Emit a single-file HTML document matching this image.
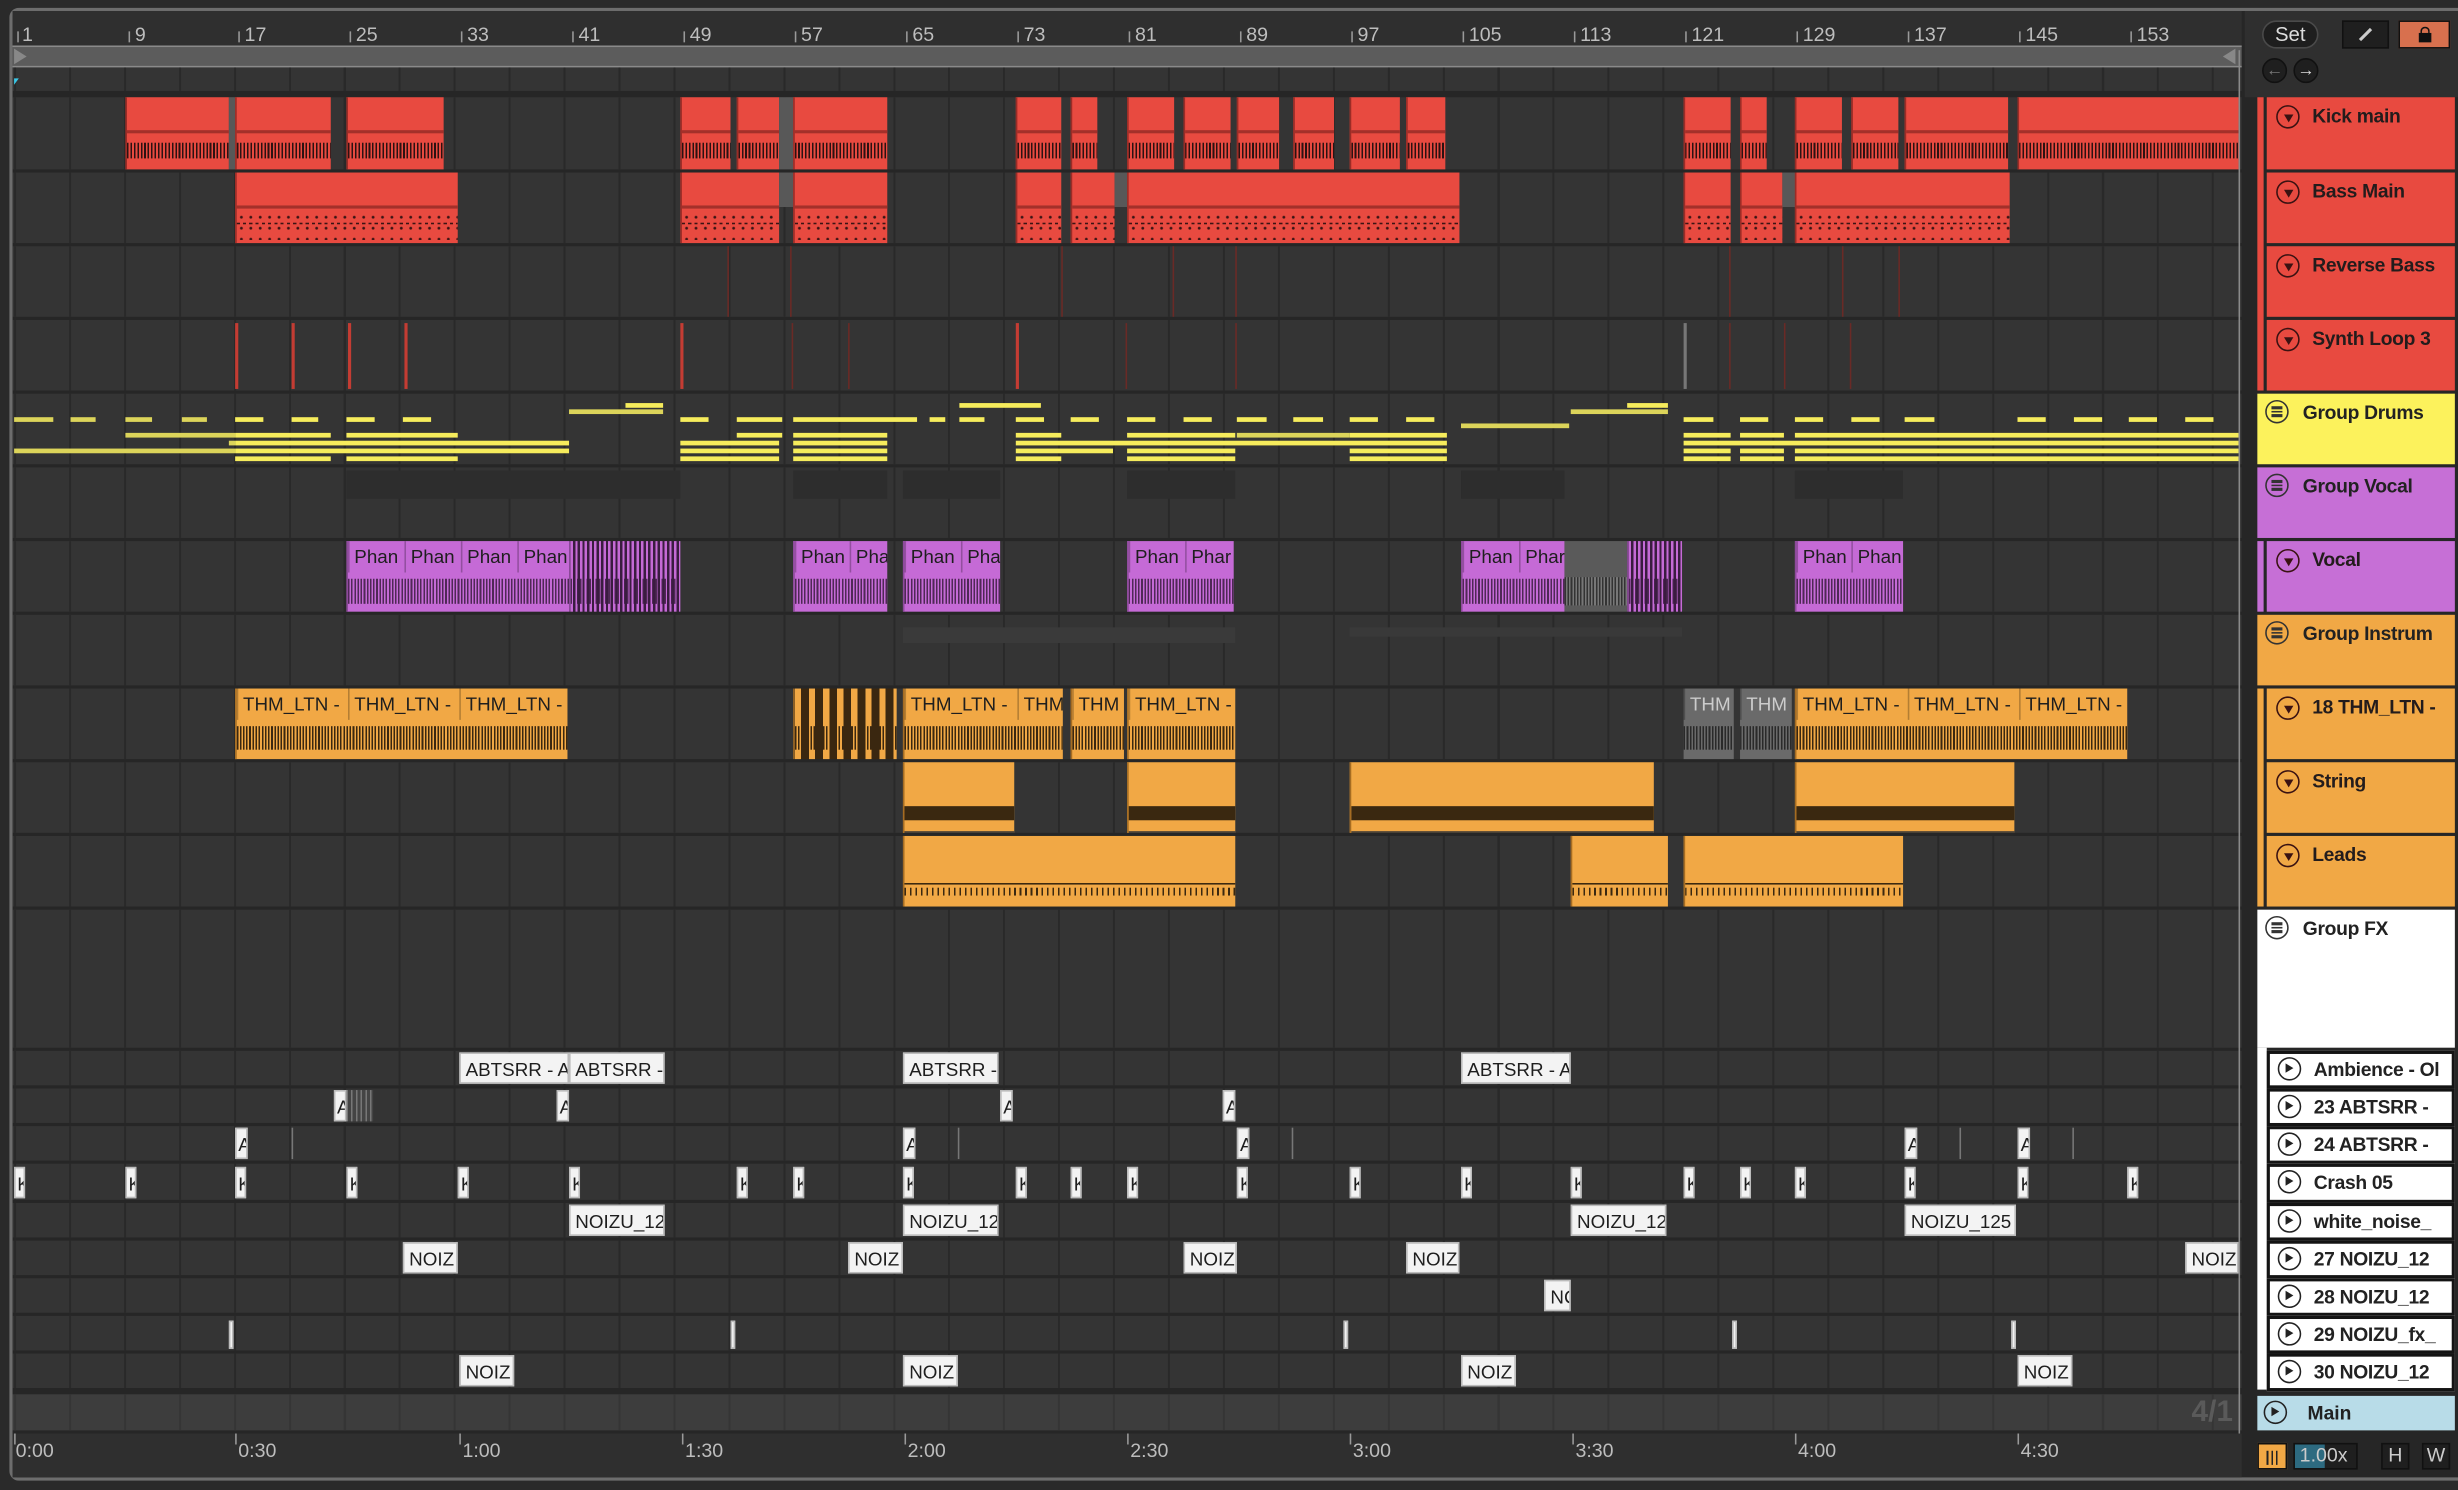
<!DOCTYPE html>
<html><head><meta charset="utf-8"><style>
*{margin:0;padding:0;box-sizing:border-box}
html,body{width:2458px;height:1490px;overflow:hidden;background:#2a2a2a}
#s{position:absolute;left:0;top:0;width:1568px;height:950px;transform:scale(1.5676,1.5684);transform-origin:0 0;font-family:"Liberation Sans",sans-serif}
#s div{position:absolute}
.row{left:8px;width:1422px;background-color:#343434;background-image:repeating-linear-gradient(90deg,#292929 0 1.3px,transparent 1.3px 35.05px);background-position:1px 0}
.k{top:62px;height:46px;background:linear-gradient(#a3302a,#a3302a) 0 21px/100% 2px no-repeat,repeating-linear-gradient(90deg,#2b1212 0 1px,transparent 1px 2.2px) 0 29px/100% 10px no-repeat,#e84a40;border-left:1px solid #9a2c26}
.b{top:110px;height:45px;background:linear-gradient(#a3302a,#a3302a) 0 21px/100% 2px no-repeat,repeating-linear-gradient(90deg,#3a1414 0 2px,transparent 2px 4px) 0 32px/100% 1px no-repeat,#e84a40;border-left:1px solid #9a2c26}
.b::after{content:'';position:absolute;left:0;right:0;top:25px;bottom:2px;background:radial-gradient(circle,#3a1414 0.7px,transparent 1.1px) 0 0/6px 7px}
.y{height:3px;background:#f6ec5c}
.yl{height:3px;background:#dcd45a}
.v{top:345px;height:45px;background:#c56ad6;border-left:1px solid #8e4a9c;overflow:hidden}
.v::after{content:'';position:absolute;left:0;right:0;top:24px;height:16px;background:repeating-linear-gradient(90deg,#3a1c40 0 1px,transparent 1px 2px);opacity:.85}
.seg{top:0;height:20px;font-size:12px;line-height:21px;color:#1e1e1e;padding-left:3px;white-space:nowrap;overflow:hidden;border-left:1px solid rgba(0,0,0,.25)}
.o{top:439px;height:45px;background:#f1a845;border-left:1px solid #a56c22;overflow:hidden}
.o::after{content:'';position:absolute;left:0;right:0;top:24px;height:15px;background:repeating-linear-gradient(90deg,#3a2710 0 1px,transparent 1px 2px)}
.g{top:439px;height:45px;background:#6a6a6a;overflow:hidden}
.g::after{content:'';position:absolute;left:0;right:0;top:24px;height:15px;background:repeating-linear-gradient(90deg,#2a2a2a 0 1px,transparent 1px 2px)}
.st{top:486px;height:45px;background:linear-gradient(#3a2810,#3a2810) 0 28px/100% 9px no-repeat,linear-gradient(#343434,#343434) 0 44px/100% 1px no-repeat,#f1a845;border-left:1px solid #a56c22}
.le{top:533px;height:45px;background:repeating-linear-gradient(90deg,#3a2810 0 1px,transparent 1px 3.5px) 0 33px/100% 5px no-repeat,linear-gradient(#3a2810,#3a2810) 0 30px/100% 1px no-repeat,#f1a845;border-left:1px solid #a56c22}
.w{height:20px;background:#f3f3f3;font-size:12px;line-height:20px;color:#1e1e1e;padding-left:3px;white-space:nowrap;overflow:hidden;border:1px solid #bbb}
.hd{left:1446px;width:120px;font-size:12.3px;letter-spacing:-0.2px;font-weight:bold;color:#231c1c;white-space:nowrap;overflow:hidden}
.hd span,.hg span{position:absolute;left:29px;top:5px}
.ic{left:6px;top:5px;width:15px;height:15px;border:1.5px solid #3a1212;border-radius:50%}
.tri{left:3.5px;top:4.5px;width:0;height:0;border-left:3.5px solid transparent;border-right:3.5px solid transparent;border-top:5px solid #3a1212}
.hg{left:1440px;width:126px;font-size:12.3px;letter-spacing:-0.2px;font-weight:bold;color:#222;white-space:nowrap;overflow:hidden}
.gl{left:3px;height:1.5px;width:7px;background:#333}
.fx{left:1446px;width:120px;height:24px;background:#fff;border:2px solid #141414;font-size:12.3px;letter-spacing:-0.2px;font-weight:bold;color:#222;white-space:nowrap;overflow:hidden}
.fx span{position:absolute;left:28px;top:3px}
.pl{left:5px;top:2px;width:15px;height:15px;border:1.5px solid #222;border-radius:50%}
.pl i{position:absolute;left:4px;top:2.5px;width:0;height:0;border-top:3.5px solid transparent;border-bottom:3.5px solid transparent;border-left:5px solid #222}
.rn{top:15px;font-size:12.5px;color:#bdbdbd}
.rt{width:1px;height:7px;background:#999;top:20px}
.tn{top:918px;font-size:12.5px;color:#bdbdbd}
.rl{width:2px;background:#c43c33}
</style></head><body><div id="s">
<div style="left:6px;top:5px;width:1590px;height:939px;border:2px solid #6d6d6d;border-radius:6px;background:#262626"></div>
<div style="left:8px;top:7px;width:1422px;height:22px;background:#2f2f2f"></div>
<div class="rn" style="left:14px">1</div><div class="rt" style="left:11px"></div>
<div class="rn" style="left:86px">9</div><div class="rt" style="left:82px"></div>
<div class="rn" style="left:156px">17</div><div class="rt" style="left:152px"></div>
<div class="rn" style="left:227px">25</div><div class="rt" style="left:223px"></div>
<div class="rn" style="left:298px">33</div><div class="rt" style="left:294px"></div>
<div class="rn" style="left:369px">41</div><div class="rt" style="left:365px"></div>
<div class="rn" style="left:440px">49</div><div class="rt" style="left:436px"></div>
<div class="rn" style="left:511px">57</div><div class="rt" style="left:507px"></div>
<div class="rn" style="left:582px">65</div><div class="rt" style="left:578px"></div>
<div class="rn" style="left:653px">73</div><div class="rt" style="left:649px"></div>
<div class="rn" style="left:724px">81</div><div class="rt" style="left:720px"></div>
<div class="rn" style="left:795px">89</div><div class="rt" style="left:791px"></div>
<div class="rn" style="left:866px">97</div><div class="rt" style="left:862px"></div>
<div class="rn" style="left:937px">105</div><div class="rt" style="left:933px"></div>
<div class="rn" style="left:1008px">113</div><div class="rt" style="left:1004px"></div>
<div class="rn" style="left:1079px">121</div><div class="rt" style="left:1075px"></div>
<div class="rn" style="left:1150px">129</div><div class="rt" style="left:1146px"></div>
<div class="rn" style="left:1221px">137</div><div class="rt" style="left:1217px"></div>
<div class="rn" style="left:1292px">145</div><div class="rt" style="left:1288px"></div>
<div class="rn" style="left:1363px">153</div><div class="rt" style="left:1359px"></div>
<div style="left:8px;top:29px;width:1422px;height:14px;background:#5c5c5c;border-top:1px solid #8a8a8a;border-bottom:1px solid #8a8a8a"></div>
<div style="left:9px;top:31px;width:0;height:0;border-top:5px solid transparent;border-bottom:5px solid transparent;border-left:8px solid #888"></div>
<div style="left:1418px;top:31px;width:0;height:0;border-top:5px solid transparent;border-bottom:5px solid transparent;border-right:8px solid #888"></div>
<div class="row" style="top:43px;height:15px"></div>
<div style="left:9px;top:50px;width:0;height:0;border-left:3px solid #3ac8e8;border-bottom:4px solid transparent"></div>
<div class="row" style="top:62px;height:46px"></div>
<div class="row" style="top:110px;height:45px"></div>
<div class="row" style="top:157px;height:45px"></div>
<div class="row" style="top:204px;height:45px"></div>
<div class="row" style="top:251px;height:45px"></div>
<div class="row" style="top:298px;height:45px"></div>
<div class="row" style="top:345px;height:45px"></div>
<div class="row" style="top:392px;height:45px"></div>
<div class="row" style="top:439px;height:45px"></div>
<div class="row" style="top:486px;height:45px"></div>
<div class="row" style="top:533px;height:45px"></div>
<div class="row" style="top:580px;height:88px"></div>
<div class="row" style="top:670px;height:22px"></div>
<div class="row" style="top:694px;height:22px"></div>
<div class="row" style="top:718px;height:22px"></div>
<div class="row" style="top:742px;height:23px"></div>
<div class="row" style="top:767px;height:22px"></div>
<div class="row" style="top:791px;height:22px"></div>
<div class="row" style="top:815px;height:22px"></div>
<div class="row" style="top:839px;height:22px"></div>
<div class="row" style="top:863px;height:22px"></div>
<div class="row" style="top:889px;height:23px;background-color:#3d3d3d;background-image:repeating-linear-gradient(90deg,#353535 0 1.3px,transparent 1.3px 35.05px)"></div>
<div class="k" style="left:80px;width:66px"></div><div style="left:146px;top:62px;width:4px;height:46px;background:#585858"></div>
<div class="k" style="left:150px;width:61px"></div><div class="k" style="left:221px;width:62px"></div>
<div class="k" style="left:434px;width:32px"></div><div class="k" style="left:470px;width:27px"></div><div style="left:497px;top:62px;width:9px;height:46px;background:#585858"></div><div class="k" style="left:506px;width:60px"></div>
<div class="k" style="left:648px;width:29px"></div><div class="k" style="left:683px;width:17px"></div><div class="k" style="left:719px;width:30px"></div><div class="k" style="left:755px;width:30px"></div><div class="k" style="left:789px;width:27px"></div><div class="k" style="left:825px;width:26px"></div><div class="k" style="left:861px;width:32px"></div><div class="k" style="left:897px;width:25px"></div>
<div class="k" style="left:1074px;width:30px"></div><div class="k" style="left:1110px;width:17px"></div><div class="k" style="left:1145px;width:30px"></div><div class="k" style="left:1181px;width:30px"></div><div class="k" style="left:1215px;width:66px"></div><div class="k" style="left:1287px;width:141px"></div>
<div class="b" style="left:150px;width:142px"></div>
<div class="b" style="left:434px;width:63px"></div><div style="left:497px;top:110px;width:9px;height:22px;background:#585858"></div><div class="b" style="left:506px;width:60px"></div>
<div class="b" style="left:648px;width:29px"></div><div class="b" style="left:683px;width:28px"></div><div style="left:711px;top:110px;width:8px;height:22px;background:#585858"></div><div class="b" style="left:719px;width:212px"></div>
<div class="b" style="left:1074px;width:30px"></div><div class="b" style="left:1110px;width:27px"></div><div style="left:1137px;top:110px;width:8px;height:22px;background:#585858"></div><div class="b" style="left:1145px;width:137px"></div>
<div style="left:464px;top:157px;width:1px;height:45px;background:#6a2a26"></div><div style="left:504px;top:157px;width:1px;height:45px;background:#6a2a26"></div><div style="left:677px;top:157px;width:1px;height:45px;background:#6a2a26"></div><div style="left:748px;top:157px;width:1px;height:45px;background:#6a2a26"></div><div style="left:788px;top:157px;width:1px;height:45px;background:#6a2a26"></div><div style="left:1103px;top:157px;width:1px;height:45px;background:#6a2a26"></div><div style="left:1175px;top:157px;width:1px;height:45px;background:#6a2a26"></div><div style="left:1211px;top:157px;width:1px;height:45px;background:#6a2a26"></div>
<div class="rl" style="left:150px;top:206px;height:42px"></div><div class="rl" style="left:186px;top:206px;height:42px"></div><div class="rl" style="left:222px;top:206px;height:42px"></div><div class="rl" style="left:258px;top:206px;height:42px"></div><div class="rl" style="left:434px;top:206px;height:42px"></div><div class="rl" style="left:648px;top:206px;height:42px"></div><div class="rl" style="left:1074px;top:206px;height:42px;background:#777"></div>
<div style="left:505px;top:206px;width:1px;height:42px;background:#6a2a26"></div><div style="left:541px;top:206px;width:1px;height:42px;background:#6a2a26"></div><div style="left:718px;top:206px;width:1px;height:42px;background:#6a2a26"></div><div style="left:788px;top:206px;width:1px;height:42px;background:#6a2a26"></div><div style="left:1103px;top:206px;width:1px;height:42px;background:#6a2a26"></div><div style="left:1138px;top:206px;width:1px;height:42px;background:#6a2a26"></div><div style="left:1180px;top:206px;width:1px;height:42px;background:#6a2a26"></div>
<div class="y" style="top:257px;left:399px;width:24px"></div><div class="y" style="top:257px;left:612px;width:52px"></div><div class="y" style="top:257px;left:1038px;width:26px"></div>
<div class="yl" style="top:261px;left:363px;width:60px"></div><div class="yl" style="top:261px;left:1002px;width:62px"></div>
<div class="yl" style="top:266px;left:9px;width:25px"></div><div class="yl" style="top:266px;left:45px;width:16px"></div><div class="yl" style="top:266px;left:80px;width:17px"></div><div class="yl" style="top:266px;left:116px;width:16px"></div>
<div class="y" style="top:266px;left:150px;width:18px"></div><div class="y" style="top:266px;left:186px;width:17px"></div><div class="y" style="top:266px;left:221px;width:18px"></div><div class="y" style="top:266px;left:257px;width:18px"></div><div class="y" style="top:266px;left:434px;width:18px"></div><div class="y" style="top:266px;left:470px;width:29px"></div><div class="y" style="top:266px;left:506px;width:79px"></div><div class="y" style="top:266px;left:593px;width:10px"></div><div class="y" style="top:266px;left:612px;width:16px"></div><div class="y" style="top:266px;left:648px;width:18px"></div><div class="y" style="top:266px;left:683px;width:18px"></div><div class="y" style="top:266px;left:719px;width:18px"></div><div class="y" style="top:266px;left:755px;width:18px"></div><div class="y" style="top:266px;left:789px;width:19px"></div><div class="y" style="top:266px;left:825px;width:19px"></div><div class="y" style="top:266px;left:861px;width:18px"></div><div class="y" style="top:266px;left:897px;width:18px"></div><div class="yl" style="top:270px;left:932px;width:69px"></div>
<div class="y" style="top:266px;left:1074px;width:19px"></div><div class="y" style="top:266px;left:1110px;width:18px"></div><div class="y" style="top:266px;left:1145px;width:18px"></div><div class="y" style="top:266px;left:1181px;width:18px"></div><div class="y" style="top:266px;left:1215px;width:19px"></div><div class="y" style="top:266px;left:1287px;width:18px"></div><div class="y" style="top:266px;left:1323px;width:18px"></div><div class="y" style="top:266px;left:1358px;width:18px"></div><div class="y" style="top:266px;left:1394px;width:18px"></div>
<div class="yl" style="top:276px;left:80px;width:70px"></div><div class="y" style="top:276px;left:150px;width:61px"></div><div class="y" style="top:276px;left:221px;width:71px"></div><div class="y" style="top:276px;left:470px;width:29px"></div><div class="y" style="top:276px;left:506px;width:60px"></div><div class="y" style="top:276px;left:648px;width:29px"></div><div class="y" style="top:276px;left:719px;width:69px"></div><div class="yl" style="top:276px;left:789px;width:72px"></div><div class="y" style="top:276px;left:861px;width:62px"></div><div class="y" style="top:276px;left:1074px;width:30px"></div><div class="y" style="top:276px;left:1110px;width:28px"></div><div class="y" style="top:276px;left:1145px;width:283px"></div>
<div class="yl" style="top:281px;left:146px;width:4px"></div><div class="y" style="top:281px;left:150px;width:213px"></div><div class="y" style="top:281px;left:434px;width:63px"></div><div class="y" style="top:281px;left:506px;width:60px"></div><div class="y" style="top:281px;left:648px;width:275px"></div><div class="y" style="top:281px;left:1074px;width:354px"></div>
<div class="yl" style="top:286px;left:9px;width:141px"></div><div class="y" style="top:286px;left:150px;width:213px"></div><div class="y" style="top:286px;left:434px;width:63px"></div><div class="y" style="top:286px;left:506px;width:60px"></div><div class="y" style="top:286px;left:648px;width:62px"></div><div class="y" style="top:286px;left:719px;width:69px"></div><div class="y" style="top:286px;left:861px;width:62px"></div><div class="y" style="top:286px;left:1074px;width:30px"></div><div class="y" style="top:286px;left:1110px;width:28px"></div><div class="y" style="top:286px;left:1145px;width:283px"></div>
<div class="y" style="top:291px;left:150px;width:61px"></div><div class="y" style="top:291px;left:221px;width:71px"></div><div class="y" style="top:291px;left:434px;width:63px"></div><div class="y" style="top:291px;left:506px;width:60px"></div><div class="y" style="top:291px;left:648px;width:29px"></div><div class="y" style="top:291px;left:719px;width:69px"></div><div class="y" style="top:291px;left:861px;width:62px"></div><div class="y" style="top:291px;left:1074px;width:30px"></div><div class="y" style="top:291px;left:1110px;width:28px"></div><div class="y" style="top:291px;left:1145px;width:283px"></div>
<div style="left:221px;top:300px;width:213px;height:18px;background:#2d2d2d"></div><div style="left:506px;top:300px;width:60px;height:18px;background:#2d2d2d"></div><div style="left:576px;top:300px;width:62px;height:18px;background:#2d2d2d"></div><div style="left:719px;top:300px;width:69px;height:18px;background:#2d2d2d"></div><div style="left:932px;top:300px;width:66px;height:18px;background:#2d2d2d"></div><div style="left:1145px;top:300px;width:69px;height:18px;background:#2d2d2d"></div>
<div class="v" style="left:221px;width:142px"><div class="seg" style="left:0;width:36px">Phan</div><div class="seg" style="left:36px;width:36px">Phan</div><div class="seg" style="left:72px;width:36px">Phan</div><div class="seg" style="left:108px;width:34px">Phan</div></div>
<div class="v" style="left:363px;width:71px;background:repeating-linear-gradient(90deg,#c56ad6 0 1.5px,#3a1c40 1.5px 3px)"></div>
<div class="v" style="left:506px;width:60px"><div class="seg" style="left:0;width:35px">Phan</div><div class="seg" style="left:35px;width:25px">Pha</div></div>
<div class="v" style="left:576px;width:62px"><div class="seg" style="left:0;width:36px">Phan</div><div class="seg" style="left:36px;width:26px">Pha</div></div>
<div class="v" style="left:719px;width:68px"><div class="seg" style="left:0;width:36px">Phan</div><div class="seg" style="left:36px;width:32px">Phar</div></div>
<div class="v" style="left:932px;width:66px"><div class="seg" style="left:0;width:36px">Phan</div><div class="seg" style="left:36px;width:30px">Phar</div></div>
<div style="left:998px;top:345px;width:40px;height:45px;background:#5a5a5a"></div><div style="left:998px;top:368px;width:40px;height:18px;background:repeating-linear-gradient(90deg,#333 0 1px,#777 1px 2px)"></div>
<div class="v" style="left:1038px;width:35px;background:repeating-linear-gradient(90deg,#c56ad6 0 1.5px,#3a1c40 1.5px 3px)"></div>
<div class="v" style="left:1145px;width:69px"><div class="seg" style="left:0;width:35px">Phan</div><div class="seg" style="left:35px;width:34px">Phan</div></div>
<div style="left:576px;top:400px;width:212px;height:10px;background:#3a3a3a"></div><div style="left:861px;top:400px;width:212px;height:6px;background:#393939"></div>
<div class="o" style="left:150px;width:212px"><div class="seg" style="left:0;width:71px">THM_LTN -</div><div class="seg" style="left:71px;width:71px">THM_LTN -</div><div class="seg" style="left:142px;width:70px">THM_LTN -</div></div>
<div class="o" style="left:506px;width:66px;background:repeating-linear-gradient(90deg,#f1a845 0 4px,#3a2710 4px 9px)"></div>
<div class="o" style="left:576px;width:102px"><div class="seg" style="left:0;width:72px">THM_LTN -</div><div class="seg" style="left:72px;width:30px">THM</div></div>
<div class="o" style="left:683px;width:34px"><div class="seg" style="left:0;width:34px">THM</div></div>
<div class="o" style="left:719px;width:69px"><div class="seg" style="left:0;width:69px">THM_LTN -</div></div>
<div class="g" style="left:1074px;width:32px"><div class="seg" style="left:0;width:32px;color:#ccc">THM</div></div>
<div class="g" style="left:1110px;width:33px"><div class="seg" style="left:0;width:33px;color:#ccc">THM</div></div>
<div class="o" style="left:1145px;width:212px"><div class="seg" style="left:0;width:71px">THM_LTN -</div><div class="seg" style="left:71px;width:71px">THM_LTN -</div><div class="seg" style="left:142px;width:70px">THM_LTN -</div></div>
<div class="st" style="left:576px;width:71px"></div><div class="st" style="left:719px;width:69px"></div><div class="st" style="left:861px;width:194px"></div><div class="st" style="left:1145px;width:140px"></div>
<div class="le" style="left:576px;width:212px"></div><div class="le" style="left:1002px;width:62px"></div><div class="le" style="left:1074px;width:140px"></div>
<div class="w" style="left:293px;top:671px;width:70px">ABTSRR - A</div><div class="w" style="left:363px;top:671px;width:61px">ABTSRR -</div><div class="w" style="left:576px;top:671px;width:61px">ABTSRR -</div><div class="w" style="left:932px;top:671px;width:70px">ABTSRR - A</div>
<div class="w" style="left:213px;top:695px;width:8px;padding-left:1px">A</div><div style="left:221px;top:695px;width:17px;height:20px;background:repeating-linear-gradient(90deg,#777 0 1px,#444 1px 3px)"></div><div class="w" style="left:355px;top:695px;width:8px;padding-left:1px">A</div><div class="w" style="left:638px;top:695px;width:8px;padding-left:1px">A</div><div class="w" style="left:780px;top:695px;width:8px;padding-left:1px">A</div>
<div class="w" style="left:150px;top:719px;width:8px;padding-left:1px">A</div><div class="w" style="left:576px;top:719px;width:8px;padding-left:1px">A</div><div class="w" style="left:789px;top:719px;width:8px;padding-left:1px">A</div><div class="w" style="left:1215px;top:719px;width:8px;padding-left:1px">A</div><div class="w" style="left:1287px;top:719px;width:8px;padding-left:1px">A</div>
<div style="left:186px;top:719px;width:1px;height:20px;background:#777"></div><div style="left:611px;top:719px;width:1px;height:20px;background:#777"></div><div style="left:824px;top:719px;width:1px;height:20px;background:#777"></div><div style="left:1250px;top:719px;width:1px;height:20px;background:#777"></div><div style="left:1322px;top:719px;width:1px;height:20px;background:#777"></div>
<div class="w" style="left:9px;top:744px;width:7px;padding-left:1px">K</div><div class="w" style="left:80px;top:744px;width:7px;padding-left:1px">K</div><div class="w" style="left:150px;top:744px;width:7px;padding-left:1px">K</div><div class="w" style="left:221px;top:744px;width:7px;padding-left:1px">K</div><div class="w" style="left:292px;top:744px;width:7px;padding-left:1px">K</div><div class="w" style="left:363px;top:744px;width:7px;padding-left:1px">K</div><div class="w" style="left:470px;top:744px;width:7px;padding-left:1px">K</div><div class="w" style="left:506px;top:744px;width:7px;padding-left:1px">K</div><div class="w" style="left:576px;top:744px;width:7px;padding-left:1px">K</div><div class="w" style="left:648px;top:744px;width:7px;padding-left:1px">K</div><div class="w" style="left:683px;top:744px;width:7px;padding-left:1px">K</div><div class="w" style="left:719px;top:744px;width:7px;padding-left:1px">K</div><div class="w" style="left:789px;top:744px;width:7px;padding-left:1px">K</div><div class="w" style="left:861px;top:744px;width:7px;padding-left:1px">K</div><div class="w" style="left:932px;top:744px;width:7px;padding-left:1px">K</div><div class="w" style="left:1002px;top:744px;width:7px;padding-left:1px">K</div><div class="w" style="left:1074px;top:744px;width:7px;padding-left:1px">K</div><div class="w" style="left:1110px;top:744px;width:7px;padding-left:1px">K</div><div class="w" style="left:1145px;top:744px;width:7px;padding-left:1px">K</div><div class="w" style="left:1215px;top:744px;width:7px;padding-left:1px">K</div><div class="w" style="left:1287px;top:744px;width:7px;padding-left:1px">K</div><div class="w" style="left:1357px;top:744px;width:7px;padding-left:1px">K</div>
<div class="w" style="left:363px;top:768px;width:61px">NOIZU_12</div><div class="w" style="left:576px;top:768px;width:61px">NOIZU_12</div><div class="w" style="left:1002px;top:768px;width:61px">NOIZU_12</div><div class="w" style="left:1215px;top:768px;width:71px">NOIZU_125</div>
<div class="w" style="left:257px;top:792px;width:35px">NOIZ</div><div class="w" style="left:541px;top:792px;width:35px">NOIZ</div><div class="w" style="left:755px;top:792px;width:34px">NOIZ</div><div class="w" style="left:897px;top:792px;width:34px">NOIZ</div><div class="w" style="left:1394px;top:792px;width:34px">NOIZ</div>
<div class="w" style="left:985px;top:816px;width:17px">NC</div>
<div class="w" style="left:146px;top:842px;width:3px;height:18px;padding:0"></div><div class="w" style="left:466px;top:842px;width:3px;height:18px;padding:0"></div><div class="w" style="left:857px;top:842px;width:3px;height:18px;padding:0"></div><div class="w" style="left:1105px;top:842px;width:3px;height:18px;padding:0"></div><div class="w" style="left:1283px;top:842px;width:3px;height:18px;padding:0"></div>
<div class="w" style="left:293px;top:864px;width:35px">NOIZ</div><div class="w" style="left:576px;top:864px;width:35px">NOIZ</div><div class="w" style="left:932px;top:864px;width:35px">NOIZ</div><div class="w" style="left:1287px;top:864px;width:35px">NOIZ</div>
<div style="left:1398px;top:890px;font-size:19px;font-weight:bold;color:#5a5a5a">4/1</div>
<div style="left:1428px;top:32px;width:1px;height:883px;background:#8a8a8a"></div>
<div style="left:8px;top:914px;width:1422px;height:28px;background:#2f2f2f"></div>
<div class="tn" style="left:10px">0:00</div><div class="rt" style="left:9px;top:914px"></div>
<div class="tn" style="left:152px">0:30</div><div class="rt" style="left:150px;top:914px"></div>
<div class="tn" style="left:295px">1:00</div><div class="rt" style="left:293px;top:914px"></div>
<div class="tn" style="left:437px">1:30</div><div class="rt" style="left:435px;top:914px"></div>
<div class="tn" style="left:579px">2:00</div><div class="rt" style="left:577px;top:914px"></div>
<div class="tn" style="left:721px">2:30</div><div class="rt" style="left:719px;top:914px"></div>
<div class="tn" style="left:863px">3:00</div><div class="rt" style="left:861px;top:914px"></div>
<div class="tn" style="left:1005px">3:30</div><div class="rt" style="left:1003px;top:914px"></div>
<div class="tn" style="left:1147px">4:00</div><div class="rt" style="left:1145px;top:914px"></div>
<div class="tn" style="left:1289px">4:30</div><div class="rt" style="left:1287px;top:914px"></div>
<div style="left:1432px;top:7px;width:140px;height:55px;background:#2f2f2f"></div>
<div style="left:1443px;top:13px;width:36px;height:18px;background:#1e1e1e;border:1px solid #4a4a4a;border-radius:9px;color:#ddd;font-size:13px;text-align:center;line-height:16px">Set</div>
<div style="left:1494px;top:13px;width:30px;height:18px;background:#1f1f1f;border:1px solid #111"><div style="left:9px;top:7px;width:10px;height:2px;background:#ccc;transform:rotate(-45deg)"></div></div>
<div style="left:1530px;top:13px;width:33px;height:18px;background:#d8704e;border:1px solid #111"><div style="left:12px;top:7px;width:8px;height:6px;background:#111"></div><div style="left:13px;top:3px;width:6px;height:6px;border:1.5px solid #111;border-radius:3px 3px 0 0;border-bottom:none"></div></div>
<div style="left:1443px;top:37px;width:16px;height:16px;border-radius:50%;background:#1f1f1f;border:1px solid #111;color:#777;font-size:11px;text-align:center;line-height:14px">&#8592;</div>
<div style="left:1463px;top:37px;width:16px;height:16px;border-radius:50%;background:#1f1f1f;border:1px solid #111;color:#ddd;font-size:11px;text-align:center;line-height:14px">&#8594;</div>
<div style="left:1440px;top:62px;width:4px;height:187px;background:#e84a40"></div>
<div class="hd" style="top:62px;height:46px;background:#e84a40"><div class="ic"><div class="tri"></div></div><span>Kick main</span></div>
<div class="hd" style="top:110px;height:45px;background:#e84a40"><div class="ic"><div class="tri"></div></div><span>Bass Main</span></div>
<div class="hd" style="top:157px;height:45px;background:#e84a40"><div class="ic"><div class="tri"></div></div><span>Reverse Bass</span></div>
<div class="hd" style="top:204px;height:45px;background:#e84a40"><div class="ic"><div class="tri"></div></div><span>Synth Loop 3</span></div>
<div class="hg" style="top:251px;height:45px;background:#fcf25c"><div class="ic" style="left:5px;top:4px;border-color:#333"><div class="gl" style="top:3px"></div><div class="gl" style="top:5.5px"></div><div class="gl" style="top:8px"></div></div><span>Group Drums</span></div>
<div class="hg" style="top:298px;height:45px;background:#c66fd6"><div class="ic" style="left:5px;top:4px;border-color:#333"><div class="gl" style="top:3px"></div><div class="gl" style="top:5.5px"></div><div class="gl" style="top:8px"></div></div><span>Group Vocal</span></div>
<div style="left:1440px;top:345px;width:4px;height:45px;background:#c66fd6"></div>
<div class="hd" style="top:345px;height:45px;background:#c66fd6"><div class="ic"><div class="tri"></div></div><span>Vocal</span></div>
<div class="hg" style="top:392px;height:45px;background:#f1a845"><div class="ic" style="left:5px;top:4px;border-color:#333"><div class="gl" style="top:3px"></div><div class="gl" style="top:5.5px"></div><div class="gl" style="top:8px"></div></div><span>Group Instrum</span></div>
<div style="left:1440px;top:439px;width:4px;height:139px;background:#f1a845"></div>
<div class="hd" style="top:439px;height:45px;background:#f1a845"><div class="ic"><div class="tri"></div></div><span>18 THM_LTN -</span></div>
<div class="hd" style="top:486px;height:45px;background:#f1a845"><div class="ic"><div class="tri"></div></div><span>String</span></div>
<div class="hd" style="top:533px;height:45px;background:#f1a845"><div class="ic"><div class="tri"></div></div><span>Leads</span></div>
<div class="hg" style="top:580px;height:88px;background:#fff"><div class="ic" style="left:5px;top:4px;border-color:#333"><div class="gl" style="top:3px"></div><div class="gl" style="top:5.5px"></div><div class="gl" style="top:8px"></div></div><span>Group FX</span></div>
<div style="left:1440px;top:668px;width:6px;height:218px;background:#fff"></div>
<div class="fx" style="top:670px"><div class="pl"><i></i></div><span>Ambience - Ol</span></div>
<div class="fx" style="top:694px"><div class="pl"><i></i></div><span>23 ABTSRR -</span></div>
<div class="fx" style="top:718px"><div class="pl"><i></i></div><span>24 ABTSRR -</span></div>
<div class="fx" style="top:742px;height:25px"><div class="pl"><i></i></div><span>Crash 05</span></div>
<div class="fx" style="top:767px"><div class="pl"><i></i></div><span>white_noise_</span></div>
<div class="fx" style="top:791px"><div class="pl"><i></i></div><span>27 NOIZU_12</span></div>
<div class="fx" style="top:815px"><div class="pl"><i></i></div><span>28 NOIZU_12</span></div>
<div class="fx" style="top:839px"><div class="pl"><i></i></div><span>29 NOIZU_fx_</span></div>
<div class="fx" style="top:863px"><div class="pl"><i></i></div><span>30 NOIZU_12</span></div>
<div style="left:1440px;top:890px;width:126px;height:22px;background:#b8dce8;font-size:12.3px;font-weight:bold;color:#222"><div class="pl" style="left:4px;top:3px"><i></i></div><span style="position:absolute;left:32px;top:4px">Main</span></div>
<div style="left:1440px;top:920px;width:19px;height:17px;background:#f1a845;border:1px solid #111;background-image:linear-gradient(90deg,transparent 5px,#222 5px 6px,transparent 6px 8px,#222 8px 9px,transparent 9px 11px,#222 11px 12px,transparent 12px);background-size:100% 9px;background-repeat:no-repeat;background-position:0 4px"></div>
<div style="left:1463px;top:920px;width:41px;height:17px;background:#1f1f1f;border:1px solid #111;font-size:12.5px;color:#ccc;line-height:15px;padding-left:3px"><div style="left:0;top:0;width:19px;height:15px;background:#2d6a80"></div><span style="position:relative">1.00x</span></div>
<div style="left:1519px;top:920px;width:18px;height:17px;background:#1f1f1f;border:1px solid #111;font-size:12.5px;color:#ccc;text-align:center;line-height:15px">H</div>
<div style="left:1545px;top:920px;width:18px;height:17px;background:#1f1f1f;border:1px solid #111;font-size:12.5px;color:#ccc;text-align:center;line-height:15px">W</div>
</div></body></html>
